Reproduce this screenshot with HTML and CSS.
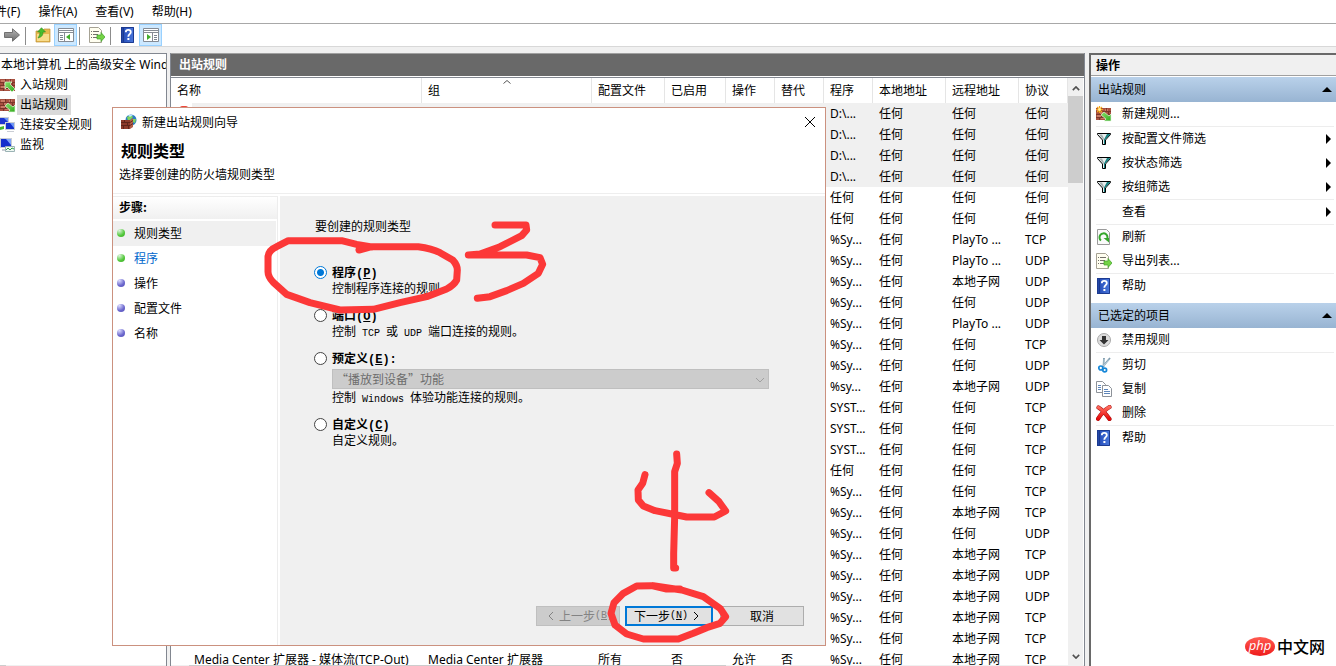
FILE: index.html
```html
<!DOCTYPE html>
<html lang="zh-CN">
<head>
<meta charset="utf-8">
<title>高级安全 Windows 防火墙</title>
<link rel="stylesheet" href="styles.css">
</head>
<body>
<svg class="defs" aria-hidden="true">
  <defs>
    <linearGradient id="blue" x1="0" x2="1" y1="0" y2="0"><stop offset="0" stop-color="#1c3f9c"/><stop offset=".3" stop-color="#2c55c0"/><stop offset="1" stop-color="#4a78dc"/></linearGradient>
    <linearGradient id="red" x1="0" x2="0" y1="0" y2="1"><stop offset="0" stop-color="#ff6a5c"/><stop offset="1" stop-color="#e60a0a"/></linearGradient>
    <linearGradient id="grey" x1="0" x2="0" y1="0" y2="1"><stop offset="0" stop-color="#b4b4b4"/><stop offset="1" stop-color="#6c6c6c"/></linearGradient>
    <linearGradient id="green" x1="0" x2="1" y1="0" y2="1"><stop offset="0" stop-color="#8be36a"/><stop offset="1" stop-color="#2fa81e"/></linearGradient>
    <symbol id="bricks" viewBox="0 0 16 16"><path fill="#a85040" d="M0 2h15v12H0z"/><path fill="#c97a66" d="M1 3h4v2H1zM9 3h3v2H9zM4 6h3v2H4zM1 9h4v2H1zM5 12h4v1H5z"/><path stroke="#713026" stroke-width=".8" d="M0 5.500h15M0 8.500h15M0 11.500h15M5.500 2v3M10.500 2v3M3.500 6v2M8.500 6v2M12.500 6v2M5.500 9v2M10.500 9v2M3.500 12v2" fill="none"/></symbol>
    <symbol id="inbound" viewBox="0 0 16 16"><use href="#bricks"/><path d="M5 5h7l-2 2 5 5-3 3-5-5-2 2z" fill="url(#green)" stroke="#e4f8dc" stroke-width=".7"/></symbol>
    <symbol id="outbound" viewBox="0 0 16 16"><use href="#bricks"/><path d="M15 15H8l2-2-5-4 3-3 5 4 2-2z" fill="url(#green)" stroke="#e4f8dc" stroke-width=".7"/></symbol>
    <symbol id="newrule" viewBox="0 0 16 16"><use href="#outbound"/><path d="M3.500-.2v7.400M-.2 3.500h7.400M1 1l5 5M6 1L1 6" stroke="#f7a51c" stroke-width="1.200"/><circle cx="3.500" cy="3.500" r="1.400" fill="#ffef9a"/></symbol>
    <symbol id="pcs" viewBox="0 0 16 16"><path fill="#c9cdd4" d="M0 0h9v8H0z"/><path fill="#1d35d0" d="M0 1h8v6H0z"/><path fill="#c9cdd4" d="M5 5h10v8H5zM7 14h7v1H7z"/><path fill="#1430cc" d="M6 6h8v6H6z"/><path fill="#6f98f4" d="M10 6h4v5zM4 1h4v4z"/><path fill="#47b72e" d="M0 10l4-1v3l-4 1z"/></symbol>
    <symbol id="monitor" viewBox="0 0 16 16"><path fill="#c9cdd4" d="M0 1h12v10H0zM2 12h8v2H2z"/><path fill="#1430cc" d="M1 2h10v8H1z"/><path fill="#7fa5f8" d="M6 2h5v6z"/><path fill="#eef6f2" stroke="#9bb3b5" d="M5.500 9.500h9v5h-9z"/><path d="M6 13l2-2 2 2 2-2 2 1" fill="none" stroke="#35a743"/></symbol>
    <symbol id="wizard" viewBox="0 0 16 16"><circle cx="10" cy="6" r="5.500" fill="#2c7cc4"/><path fill="#7fd45c" d="M6 3l4-2 2 2-3 3-2 1zM12 5l3 0-1 4-2-1z"/><path fill="#bce6ff" d="M7 1.500l3-1 2 .5-3 2z"/><path fill="#8d3b2b" d="M0 6h9v9H0z"/><path fill="#b25e49" d="M9 6l3-2v9l-3 2z"/><path d="M0 8.500h9l3-2M0 11.500h9l3-2M3.500 6v2M6.500 9v2M2.500 12v3M7.500 12v3" fill="none" stroke="#562016" stroke-width=".8"/></symbol>
    <symbol id="help" viewBox="0 0 16 16"><path fill="url(#blue)" d="M1 0h13v16H1z"/><path fill="none" stroke="#1c3a90" d="M1.500.5h12v15h-12zM3.500 0v16"/><path fill="none" stroke="#fff" stroke-width="1.800" d="M5.800 5.200c0-3 5-3 5 0 0 2-2.500 2-2.500 4.500"/><path fill="#fff" d="M7.400 11h2v2h-2z"/></symbol>
    <symbol id="export" viewBox="0 0 16 16"><path fill="#fffef0" stroke="#a6a294" d="M.5.5h9l3 3v12H.5z"/><path stroke="#73706a" d="M4 4.500h6M4 7.500h5M4 10.500h5M2 4.500h1M2 7.500h1M2 10.500h1"/><path fill="#74d345" stroke="#3fa028" stroke-width=".7" d="M8 8h4V5.500l4 4.500-4 4.500V12H8z"/></symbol>
    <symbol id="refresh" viewBox="0 0 16 16"><path fill="#fafafa" stroke="#9a9a9a" d="M1.500.5h9l3 3v12h-12z"/><path d="M5 11.500a4 4 0 1 1 5.500-.5" fill="none" stroke="#35a72c" stroke-width="2"/><path fill="#35a72c" d="M7.500 9H13v4.500z"/></symbol>
    <symbol id="funnel" viewBox="0 0 16 16"><path fill="#e8eeee" stroke="#000" d="M1.500 2.500h13v1L9.500 9v4.500h-3V9l-5-5.500z"/><path fill="#158080" d="M11 3h3v.5L9 8.800V13H8V8.500z"/><path fill="#a4b0b0" d="M3 3.500h3l2 4V9L6.800 8z"/></symbol>
    <symbol id="disable" viewBox="0 0 16 16"><circle cx="8" cy="8" r="6.500" fill="#ddd" stroke="#aaa"/><path fill="#333" d="M6 4h4v4h2.500L8 12.500 3.500 8H6z"/></symbol>
    <symbol id="cut" viewBox="0 0 16 16"><path d="M8 1l-.5 9M14 1L6.500 10" stroke="#7d9aac" stroke-width="1.800"/><path d="M8 2v7M13 2.500L7 9.500" stroke="#dcebf4" stroke-width=".6"/><circle cx="4.800" cy="11" r="2" fill="none" stroke="#1687d8" stroke-width="1.700"/><circle cx="8.700" cy="13" r="1.900" fill="none" stroke="#1687d8" stroke-width="1.700"/></symbol>
    <symbol id="copy" viewBox="0 0 16 16"><path fill="#fff" stroke="#8d9299" d="M.5.500h6l3 3v8h-9z"/><path fill="#fff" stroke="#8d9299" d="M6.500 4.500h6l3 3v8h-9z"/><path stroke="#5d86ba" d="M2 4.500h3M2 6.500h3M2 8.500h3M8 8.500h4M8 10.500h6M8 12.500h6"/></symbol>
    <symbol id="delete" viewBox="0 0 16 16"><path d="M2.500 2.500C5 4 10 9 13.500 14M13.500 2C10 4 5 9 2 13.800" stroke="#a31212" stroke-width="4.200" stroke-linecap="round" fill="none"/><path d="M2.500 2.500C5 4 10 9 13.500 14M13.500 2C10 4 5 9 2 13.800" stroke="url(#red)" stroke-width="3.200" stroke-linecap="round" fill="none"/></symbol>
    <symbol id="forward" viewBox="0 0 16 16"><path fill="url(#grey)" stroke="#666" stroke-width=".9" d="M.5 5.500h8V1.800L15.500 8l-7 6.200v-3.700h-8z"/></symbol>
    <symbol id="folder" viewBox="0 0 16 16"><path fill="#e6b84d" stroke="#bd9136" stroke-width=".7" d="M1 4h7l1-2h6v13H1z"/><path fill="#f8dc8c" d="M2 7h12v7H2z"/><path fill="#48bd2d" stroke="#2e8c1e" stroke-width=".6" d="M3 11c4-1 5-3 5-6h2.500L6.500.7 2.500 5H5c0 3-1 4-2 6z"/></symbol>
    <symbol id="pane" viewBox="0 0 16 16"><path fill="#fff" stroke="#858b94" d="M.5 1.500h15v13H.5z"/><path stroke="#858b94" d="M1 3.500h14M1 5.500h14"/><path stroke="#858b94" d="M6.500 6v8"/><path stroke="#7a8390" d="M2 8.500h3M2 10.500h3M2 12.500h3"/><path fill="#42ad2c" d="M12 7v6l-4-3z"/></symbol>
  </defs>
</svg>

<nav class="menubar">
  <button>文件(F)</button><button>操作(A)</button><button>查看(V)</button><button>帮助(H)</button>
</nav>
<div class="toolbar">
  <button aria-label="前进"><svg class="ico"><use href="#forward"/></svg></button>
  <span class="tsep"></span>
  <button aria-label="向上"><svg class="ico"><use href="#folder"/></svg></button>
  <button class="on" aria-label="控制台树"><svg class="ico"><use href="#pane"/></svg></button>
  <span class="tsep"></span>
  <button aria-label="导出"><svg class="ico"><use href="#export"/></svg></button>
  <span class="tsep"></span>
  <button aria-label="帮助"><svg class="ico"><use href="#help"/></svg></button>
  <button class="on" aria-label="操作窗格"><svg class="ico mirror"><use href="#pane"/></svg></button>
</div>

<main class="workspace">
  <aside class="tree">
    <ul>
      <li class="root">本地计算机 上的高级安全 Wind</li>
      <li><svg class="ico"><use href="#inbound"/></svg><span>入站规则</span></li>
      <li class="sel"><svg class="ico"><use href="#outbound"/></svg><span>出站规则</span></li>
      <li><svg class="ico"><use href="#pcs"/></svg><span>连接安全规则</span></li>
      <li><svg class="ico"><use href="#monitor"/></svg><span>监视</span></li>
    </ul>
    <div class="hbar"><i></i></div>
  </aside>

  <section class="list">
    <h2>出站规则</h2>
    <div class="listbody">
      <div class="tablewrap">
        <table>
          <colgroup><col><col class="w-group"><col class="w-wide"><col class="w-enabled"><col class="w-slim"><col class="w-slim"><col class="w-slim"><col class="w-wide"><col class="w-wide"><col class="w-slim"></colgroup>
          <thead><tr><th>名称</th><th class="sorted">组<svg class="caret" viewBox="0 0 8 4"><path d="M.5 3.500L4 .5l3.500 3"/></svg></th><th>配置文件</th><th>已启用</th><th>操作</th><th>替代</th><th>程序</th><th>本地地址</th><th>远程地址</th><th>协议</th></tr></thead>
          <tbody>
            <tr class="hl"><td><i class="block"></i></td><td></td><td></td><td></td><td></td><td></td><td>D:\...</td><td>任何</td><td>任何</td><td>任何</td></tr>
            <tr class="hl"><td></td><td></td><td></td><td></td><td></td><td></td><td>D:\...</td><td>任何</td><td>任何</td><td>任何</td></tr>
            <tr class="hl"><td></td><td></td><td></td><td></td><td></td><td></td><td>D:\...</td><td>任何</td><td>任何</td><td>任何</td></tr>
            <tr class="hl"><td></td><td></td><td></td><td></td><td></td><td></td><td>D:\...</td><td>任何</td><td>任何</td><td>任何</td></tr>
            <tr><td></td><td></td><td></td><td></td><td></td><td></td><td>任何</td><td>任何</td><td>任何</td><td>任何</td></tr>
            <tr><td></td><td></td><td></td><td></td><td></td><td></td><td>任何</td><td>任何</td><td>任何</td><td>任何</td></tr>
            <tr><td></td><td></td><td></td><td></td><td></td><td></td><td>%Sy...</td><td>任何</td><td>PlayTo ...</td><td>TCP</td></tr>
            <tr><td></td><td></td><td></td><td></td><td></td><td></td><td>%Sy...</td><td>任何</td><td>PlayTo ...</td><td>UDP</td></tr>
            <tr><td></td><td></td><td></td><td></td><td></td><td></td><td>%Sy...</td><td>任何</td><td>本地子网</td><td>UDP</td></tr>
            <tr><td></td><td></td><td></td><td></td><td></td><td></td><td>%Sy...</td><td>任何</td><td>任何</td><td>UDP</td></tr>
            <tr><td></td><td></td><td></td><td></td><td></td><td></td><td>%Sy...</td><td>任何</td><td>PlayTo ...</td><td>UDP</td></tr>
            <tr><td></td><td></td><td></td><td></td><td></td><td></td><td>%Sy...</td><td>任何</td><td>任何</td><td>TCP</td></tr>
            <tr><td></td><td></td><td></td><td></td><td></td><td></td><td>%Sy...</td><td>任何</td><td>任何</td><td>UDP</td></tr>
            <tr><td></td><td></td><td></td><td></td><td></td><td></td><td>%sy...</td><td>任何</td><td>本地子网</td><td>UDP</td></tr>
            <tr><td></td><td></td><td></td><td></td><td></td><td></td><td>SYST...</td><td>任何</td><td>任何</td><td>TCP</td></tr>
            <tr><td></td><td></td><td></td><td></td><td></td><td></td><td>SYST...</td><td>任何</td><td>任何</td><td>TCP</td></tr>
            <tr><td></td><td></td><td></td><td></td><td></td><td></td><td>SYST...</td><td>任何</td><td>任何</td><td>TCP</td></tr>
            <tr><td></td><td></td><td></td><td></td><td></td><td></td><td>任何</td><td>任何</td><td>任何</td><td>TCP</td></tr>
            <tr><td></td><td></td><td></td><td></td><td></td><td></td><td>%Sy...</td><td>任何</td><td>任何</td><td>TCP</td></tr>
            <tr><td></td><td></td><td></td><td></td><td></td><td></td><td>%Sy...</td><td>任何</td><td>本地子网</td><td>TCP</td></tr>
            <tr><td></td><td></td><td></td><td></td><td></td><td></td><td>%Sy...</td><td>任何</td><td>任何</td><td>UDP</td></tr>
            <tr><td></td><td></td><td></td><td></td><td></td><td></td><td>%Sy...</td><td>任何</td><td>本地子网</td><td>TCP</td></tr>
            <tr><td></td><td></td><td></td><td></td><td></td><td></td><td>%Sy...</td><td>任何</td><td>本地子网</td><td>UDP</td></tr>
            <tr><td></td><td></td><td></td><td></td><td></td><td></td><td>%Sy...</td><td>任何</td><td>本地子网</td><td>UDP</td></tr>
            <tr><td></td><td></td><td></td><td></td><td></td><td></td><td>%Sy...</td><td>任何</td><td>本地子网</td><td>TCP</td></tr>
            <tr><td></td><td></td><td></td><td></td><td></td><td></td><td>%Sy...</td><td>任何</td><td>本地子网</td><td>TCP</td></tr>
            <tr><td class="name">Media Center 扩展器 - 媒体流(TCP-Out)</td><td>Media Center 扩展器</td><td>所有</td><td>否</td><td>允许</td><td>否</td><td>%Sy...</td><td>任何</td><td>本地子网</td><td>TCP</td></tr>
          </tbody>
        </table>
      </div>
      <div class="vbar">
        <svg viewBox="0 0 10 6"><path d="M1 5l4-4 4 4"/></svg>
        <i></i>
        <svg viewBox="0 0 10 6"><path d="M1 1l4 4 4-4"/></svg>
      </div>
    </div>
    <div class="hbar wide"><i></i></div>
  </section>

  <aside class="actions">
    <h2>操作</h2>
    <h3>出站规则<i class="up"></i></h3>
    <ul>
      <li><svg class="ico"><use href="#newrule"/></svg><button>新建规则...</button></li>
      <li class="line"><svg class="ico"><use href="#funnel"/></svg><button>按配置文件筛选</button><i class="more"></i></li>
      <li><svg class="ico"><use href="#funnel"/></svg><button>按状态筛选</button><i class="more"></i></li>
      <li><svg class="ico"><use href="#funnel"/></svg><button>按组筛选</button><i class="more"></i></li>
      <li class="line"><span class="ico"></span><button>查看</button><i class="more"></i></li>
      <li class="line"><svg class="ico"><use href="#refresh"/></svg><button>刷新</button></li>
      <li><svg class="ico"><use href="#export"/></svg><button>导出列表...</button></li>
      <li class="line"><svg class="ico"><use href="#help"/></svg><button>帮助</button></li>
    </ul>
    <h3>已选定的项目<i class="up"></i></h3>
    <ul>
      <li><svg class="ico"><use href="#disable"/></svg><button>禁用规则</button></li>
      <li class="line"><svg class="ico"><use href="#cut"/></svg><button>剪切</button></li>
      <li><svg class="ico"><use href="#copy"/></svg><button>复制</button></li>
      <li><svg class="ico"><use href="#delete"/></svg><button>删除</button></li>
      <li class="line"><svg class="ico"><use href="#help"/></svg><button>帮助</button></li>
    </ul>
  </aside>
</main>

<section class="dialog" role="dialog" aria-labelledby="dlg">
  <header class="titlebar">
    <svg class="ico"><use href="#wizard"/></svg><span id="dlg">新建出站规则向导</span>
    <button class="close" aria-label="关闭"><svg viewBox="0 0 12 12"><path d="M1 1l10 10M11 1L1 11"/></svg></button>
  </header>
  <div class="intro"><h1>规则类型</h1><p>选择要创建的防火墙规则类型</p></div>
  <div class="columns">
    <nav class="steps">
      <h2>步骤:</h2>
      <ol>
        <li class="current"><i class="dot done"></i>规则类型</li>
        <li><i class="dot done"></i><a href="#program">程序</a></li>
        <li><i class="dot"></i>操作</li>
        <li><i class="dot"></i>配置文件</li>
        <li><i class="dot"></i>名称</li>
      </ol>
    </nav>
    <form class="page">
      <p class="question">要创建的规则类型</p>
      <div class="options">
        <div class="option"><input type="radio" name="kind" id="k1" checked><label for="k1">程序<b>(<u>P</u>)</b></label><p>控制程序连接的规则。</p></div>
        <div class="option"><input type="radio" name="kind" id="k2"><label for="k2">端口<b>(<u>O</u>)</b></label><p>控制<span class="mono"> TCP </span>或<span class="mono"> UDP </span>端口连接的规则。</p></div>
        <div class="option"><input type="radio" name="kind" id="k3"><label for="k3">预定义<b>(<u>E</u>):</b></label>
          <div class="combo"><select disabled aria-label="预定义规则"><option>“播放到设备”功能</option></select><svg viewBox="0 0 10 6"><path d="M1 1l4 4 4-4"/></svg></div>
          <p>控制<span class="mono"> Windows </span>体验功能连接的规则。</p></div>
        <div class="option"><input type="radio" name="kind" id="k4"><label for="k4">自定义<b>(<u>C</u>)</b></label><p>自定义规则。</p></div>
      </div>
      <div class="buttons">
        <button type="button" disabled><svg viewBox="0 0 6 10"><path d="M5 1L1 5l4 4"/></svg>上一步<span class="mono">(<u>B</u>)</span></button>
        <button type="button" class="primary">下一步<span class="mono">(<u>N</u>)</span><svg viewBox="0 0 6 10"><path d="M1 1l4 4-4 4"/></svg></button>
        <button type="button">取消</button>
      </div>
    </form>
  </div>
  <svg class="mark first" viewBox="0 0 900 750"><path d="M297 135L335 125 475 125 Q515 130 540 143 L578 165 Q592 180 592 195 L590 225 Q582 240 560 252 L500 275 420 293 340 313 240 315 150 293 80 268 40 232 Q24 215 24 200 L24 155 Q26 135 50 125 L85 107 245 107 290 118 335 126M705 60L798 60 800 75 785 92 720 125 660 147 625 150 800 150 840 158 848 178 835 205 790 235 740 257 690 275 652 280"/></svg>
  <svg class="mark second" viewBox="0 0 960 678"><path d="M375 104L368 130 354 150 355 180 370 198 405 212 470 225 500 231 583 231 617 213 597 185 567 158M470 42L472 70 464 95 464 230 461 340 461 384 467 384M480 447L440 447 395 437 350 438 310 460 282 488 273 520 285 555 320 582 370 597 475 597 520 580 560 563 600 550 617 530 600 505 550 470 485 450 400 437"/></svg>
</section>

<div class="brand"><span>php</span>中文网</div>
</body>
</html>
```
FILE: styles.css
```css
* { box-sizing: border-box; margin: 0; padding: 0; }
body {
  position: relative;
  display: flex;
  flex-direction: column;
  height: 100vh;
  overflow: hidden;
  background: #f0f0f0;
  color: #000;
  font: 12px/16px "Noto Sans", "Noto Sans CJK SC", sans-serif;
}
button { border: 0; background: none; color: inherit; font: inherit; }
ul, ol { list-style: none; }
i { display: block; }
.defs { position: absolute; width: 0; height: 0; }
.ico { width: 16px; height: 16px; flex: none; display: block; }
.mirror { transform: scaleX(-1); }

.menubar { display: flex; gap: 18px; height: 24px; background: #fff; border-bottom: 1px solid #a8a8a8; overflow: hidden; flex: none; }
.menubar button { flex: none; }
.menubar button:first-child { margin-left: -17px; }
.toolbar { display: flex; height: 23px; background: #fff; border-bottom: 1px solid #d8d8d8; flex: none; }
.toolbar button { display: grid; place-items: center; width: 23px; height: 22px; border: 1px solid transparent; }
.toolbar .on { background: #cce8ff; border-color: #99d1ff; }
.tsep { width: 1px; height: 18px; margin: 3px 5px 0 2px; background: #8c8c8c; }

.workspace { display: grid; grid-template-columns: 167px minmax(0, 1fr) 247px; flex: 1; min-height: 0; padding-top: 6px; }
.tree { display: flex; flex-direction: column; background: #fff; border: solid #828790; border-width: 1px 1px 0 0; min-height: 0; overflow: hidden; }
.tree ul { flex: 1; padding-top: 1px; }
.tree li { display: flex; align-items: center; height: 20px; }
.tree li .ico { margin-right: 1px; }
.tree li span { padding: 0 3px; line-height: 20px; }
.tree .root { padding-left: 1px; white-space: nowrap; }
.tree .sel span { background: #d9d9d9; }
.hbar { height: 1px; background: #f0f0f0; flex: none; }
.hbar i { width: 6px; height: 1px; background: #cdcdcd; }
.hbar.wide { padding-left: 18px; }
.hbar.wide i { width: 60%; }

.list { display: flex; flex-direction: column; margin: 0 4px 0 3px; min-height: 0; border: solid #828790; border-width: 0 1px; background: #fff; }
.list h2 { height: 24px; padding-left: 8px; border-top: 1px solid #a0a0a0; border-bottom: 1px solid #fff; background: #696969; color: #fff; font-size: 12px; line-height: 22px; flex: none; }
.listbody { display: flex; flex: 1; min-height: 0; border-top: 1px solid #828790; }
.tablewrap { flex: 1; min-width: 0; overflow: hidden; }
table { width: 100%; border-collapse: separate; border-spacing: 0; table-layout: fixed; }
.w-group { width: 170px; }
.w-wide { width: 73px; }
.w-enabled { width: 61px; }
.w-slim { width: 49px; }
th { position: relative; height: 25px; padding-left: 6px; border-right: 1px solid #e5e5e5; text-align: left; font-weight: normal; white-space: nowrap; }
.caret { position: absolute; top: 2px; left: 48%; width: 8px; height: 4px; fill: none; stroke: #555; }
td { height: 21px; padding-left: 6px; white-space: nowrap; overflow: hidden; }
td.name { padding-left: 23px; }
.hl td { background: #f0f0f0; }
.hl td:first-child { background: linear-gradient(to right, #fff 21px, #f0f0f0 21px); }
.block { width: 8px; height: 16px; margin-left: 3px; border-radius: 2px; background: #f0483c; }
.vbar { display: flex; flex-direction: column; align-items: center; width: 16px; background: #f0f0f0; border-right: 1px solid #fff; padding: 8px 0 6px; flex: none; }
.vbar svg { width: 8px; height: 5px; fill: none; stroke: #505050; stroke-width: 2; }
.vbar i { width: 15px; height: 87px; margin: 5px 0 auto; background: #cdcdcd; }

.actions { background: #fff; border: solid #696969; border-width: 2px 0 0 2px; }
.actions h2 { height: 21px; margin-bottom: 1px; padding-left: 5px; border-bottom: 1px solid #a0a0a0; background: #f0f0f0; font-size: 12px; line-height: 21px; }
.actions h3 { display: flex; align-items: center; justify-content: space-between; height: 25px; padding: 0 4px 0 7px; background: linear-gradient(#b9d1ea, #98b4d2); font-size: 12px; font-weight: normal; }
.up { border: 5px solid transparent; border-top-width: 0; border-bottom-color: #000; }
.actions ul { margin: 0 2px 5px 5px; }
.actions li { display: flex; align-items: center; gap: 10px; height: 24px; }
.actions .line { height: 25px; border-top: 1px solid #ededed; }
.more { margin: 0 3px 0 auto; border: 5px solid transparent; border-right-width: 0; border-left-color: #000; }

.dialog { position: absolute; left: 112px; top: 107px; display: flex; flex-direction: column; width: 714px; height: 539px; border: 1px solid #cb917f; background: #fff; font-family: "Noto Sans CJK SC", sans-serif; }
.titlebar { display: flex; align-items: center; gap: 5px; height: 28px; padding: 0 9px 0 8px; }
.close { width: 12px; height: 12px; margin-left: auto; }
.close svg { display: block; width: 12px; height: 12px; fill: none; stroke: #000; }
.intro { height: 58px; padding: 3px 6px 0; border-bottom: 1px solid #eee; }
.intro h1 { padding-left: 2px; font-size: 16px; line-height: 22px; }
.intro p { padding-top: 5px; }
.columns { display: flex; flex: 1; padding-top: 2px; }
.steps { width: 165px; border: solid #ededed; border-width: 1px 1px 0 0; flex: none; }
.steps h2 { height: 22px; padding-left: 6px; background: linear-gradient(#fff, #f0f0f0); font-size: 12px; line-height: 20px; }
.steps ol { padding: 2px 1px 0 0; }
.steps li { display: flex; align-items: center; gap: 9px; height: 25px; padding: 0 0 2px 4px; }
.steps .current { background: #f0f0f0; }
.steps a { color: #0066cc; text-decoration: none; }
.dot { width: 8px; height: 8px; border-radius: 50%; background: radial-gradient(circle at 30% 20%, #dcdcff, #6a66cc 60%, #5652b8); }
.dot.done { background: radial-gradient(circle at 30% 20%, #dcf4dc, #52c83a 60%, #3da828); }
.page { display: flex; flex-direction: column; flex: 1; margin-left: 2px; padding: 22px 21px 19px 34px; background: #f0f0f0; }
.question { padding-left: 1px; }
.options { display: flex; flex-direction: column; gap: 11px; padding-top: 30px; }
.option { display: grid; grid-template-columns: 18px 1fr; }
.option p, .combo { grid-column: 2; }
.option p, .option label { height: 16px; }
.option input { appearance: none; width: 13px; height: 13px; margin-top: 2px; border: 1px solid #444; border-radius: 50%; background: #fff; }
.option input:checked { border-color: #0078d7; background: radial-gradient(circle, #0078d7 3px, #fff 4px); }
.option label { font-weight: bold; }
.option b { font-family: "Liberation Mono", monospace; line-height: 12px; }
.mono { font: 10px/12px "Liberation Mono", monospace; white-space: pre; }
.combo { position: relative; max-width: 437px; margin-top: 3px; }
.combo select { display: block; width: 100%; height: 20px; padding-left: 3px; appearance: none; border: 1px solid #bfbfbf; background: #ccc; color: #6d6d6d; font: inherit; opacity: 1; }
.combo svg { position: absolute; right: 4px; top: 8px; width: 10px; height: 6px; fill: none; stroke: #a0a0a0; }
.buttons { display: flex; justify-content: flex-end; gap: 5px; margin-top: auto; }
.buttons button { display: flex; align-items: center; justify-content: center; width: 84px; height: 20px; border: 1px solid #adadad; background: #e1e1e1; line-height: 18px; }
.buttons button:disabled { border-color: #bfbfbf; background: #ccc; color: #838383; }
.buttons .primary { width: 88px; margin-right: 2px; border: 2px solid #0078d7; }
.buttons svg { width: 6px; height: 10px; margin: 0 5px; fill: none; stroke: currentColor; }
.mark { position: absolute; fill: none; stroke: #fc3838; stroke-width: 21; stroke-linecap: round; stroke-linejoin: round; pointer-events: none; }
.first { left: 147px; top: 97px; width: 300px; height: 250px; }
.second { left: 407px; top: 332px; width: 320px; height: 226px; }

.brand { position: absolute; right: 11px; bottom: 8px; display: flex; align-items: center; gap: 2px; font: 500 16px/24px "Noto Sans CJK SC", sans-serif; }
.brand span { width: 30px; height: 19px; border-radius: 50%; background: linear-gradient(#ff5a50, #ee1c1c); color: #fff; font: italic 13px/16px "Open Sans", sans-serif; text-align: center; }
```
